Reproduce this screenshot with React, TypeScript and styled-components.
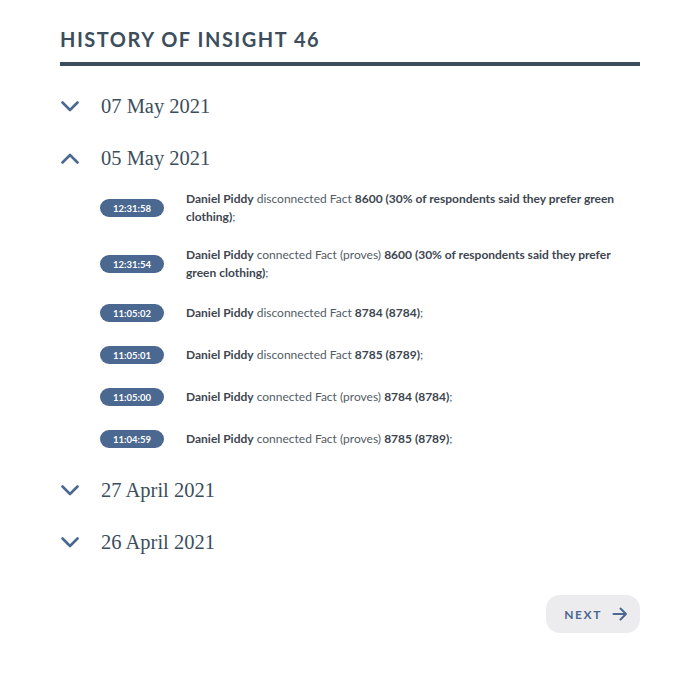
import React, { useState } from 'react'
import styled, { createGlobalStyle } from 'styled-components'

interface LogEntry {
  time: string
  parts: { text: string; bold?: boolean }[]
}

interface DayGroup {
  date: string
  entries: LogEntry[]
}

const GlobalStyle = createGlobalStyle`
  body { margin: 0; background: #fff; font-family: Lato, "Open Sans", sans-serif; }
`

const Page = styled.div`
  padding: 25px 37px 40px 60px;
  width: 580px;
`
const Title = styled.h1`
  margin: 0; font-size: 20px; font-weight: 700; letter-spacing: 1.5px;
  color: #3c4e5d; line-height: 28px; padding-bottom: 9px;
  border-bottom: 4px solid #3c4e5d;
`
const List = styled.div`
  display: flex; flex-direction: column; gap: 8px; margin-top: 18px;
`
const DayHeader = styled.button`
  display: flex; align-items: center; height: 44px; padding: 0;
  border: none; background: none; cursor: pointer; text-align: left;
`
const ChevronBox = styled.span`
  width: 40px; display: flex; align-items: center; padding-left: 1px;
`
const DateLabel = styled.span`
  font-family: "Liberation Serif", "DejaVu Serif", serif;
  font-size: 20.5px; color: #3c4e5d;
`
const Entries = styled.div`
  display: flex; flex-direction: column;
`
const EntryRow = styled.div`
  display: flex; align-items: center; min-height: 42px; padding: 10px 0;
  box-sizing: border-box; margin-left: 40px;
`
const Badge = styled.span`
  flex: none; width: 64px; height: 18px; border-radius: 9px;
  background: #4b6890; color: #fff; font-size: 9.5px; font-weight: 700;
  display: flex; align-items: center; justify-content: center;
`
const EntryText = styled.div`
  margin-left: 22px; font-size: 12px; line-height: 18px; color: #535c66;
  flex: 1;
`
const Strong = styled.b`
  font-weight: 700; color: #3d4650;
`
const Footer = styled.div`
  display: flex; justify-content: flex-end; margin-top: 31px;
`
const NextButton = styled.button`
  display: flex; align-items: center; gap: 10px; height: 38px; padding: 0 12px 0 18px;
  border: none; border-radius: 14px; background: #ececee; cursor: pointer;
  font-family: Lato, sans-serif; font-size: 12px; font-weight: 700;
  letter-spacing: 1.6px; color: #4b6890;
`

const groups: DayGroup[] = [
  { date: '07 May 2021', entries: [] },
  {
    date: '05 May 2021',
    entries: [
      { time: '12:31:58', parts: [{ text: 'Daniel Piddy', bold: true }, { text: ' disconnected Fact ' }, { text: '8600 (30% of respondents said they prefer green clothing)', bold: true }, { text: ';' }] },
      { time: '12:31:54', parts: [{ text: 'Daniel Piddy', bold: true }, { text: ' connected Fact (proves) ' }, { text: '8600 (30% of respondents said they prefer green clothing)', bold: true }, { text: ';' }] },
      { time: '11:05:02', parts: [{ text: 'Daniel Piddy', bold: true }, { text: ' disconnected Fact ' }, { text: '8784 (8784)', bold: true }, { text: ';' }] },
      { time: '11:05:01', parts: [{ text: 'Daniel Piddy', bold: true }, { text: ' disconnected Fact ' }, { text: '8785 (8789)', bold: true }, { text: ';' }] },
      { time: '11:05:00', parts: [{ text: 'Daniel Piddy', bold: true }, { text: ' connected Fact (proves) ' }, { text: '8784 (8784)', bold: true }, { text: ';' }] },
      { time: '11:04:59', parts: [{ text: 'Daniel Piddy', bold: true }, { text: ' connected Fact (proves) ' }, { text: '8785 (8789)', bold: true }, { text: ';' }] },
    ],
  },
  { date: '27 April 2021', entries: [] },
  { date: '26 April 2021', entries: [] },
]

function Chevron({ up }: { up: boolean }) {
  return (
    <svg width="18" height="11" viewBox="0 0 18 11" fill="none">
      <path
        d={up ? 'M1.5 9.5 L9 2 L16.5 9.5' : 'M1.5 1.5 L9 9 L16.5 1.5'}
        stroke="#4b6890" strokeWidth="2.6" strokeLinecap="round" strokeLinejoin="round"
      />
    </svg>
  )
}

export default function App() {
  const [open, setOpen] = useState<string | null>('05 May 2021')

  return (
    <Page>
      <GlobalStyle />
      <Title>HISTORY OF INSIGHT 46</Title>
      <List>
        {groups.map(g => {
          const isOpen = open === g.date
          return (
            <div key={g.date}>
              <DayHeader onClick={() => setOpen(isOpen ? null : g.date)}>
                <ChevronBox><Chevron up={isOpen} /></ChevronBox>
                <DateLabel>{g.date}</DateLabel>
              </DayHeader>
              {isOpen && (
                <Entries>
                  {g.entries.map(e => (
                    <EntryRow key={e.time}>
                      <Badge>{e.time}</Badge>
                      <EntryText>
                        {e.parts.map((p, i) => p.bold ? <Strong key={i}>{p.text}</Strong> : <span key={i}>{p.text}</span>)}
                      </EntryText>
                    </EntryRow>
                  ))}
                </Entries>
              )}
            </div>
          )
        })}
      </List>
      <Footer>
        <NextButton>
          NEXT
          <svg width="16" height="14" viewBox="0 0 16 14" fill="none">
            <path d="M1.5 7 H14 M8.5 1.5 L14 7 L8.5 12.5" stroke="#4b6890" strokeWidth="2" strokeLinecap="round" strokeLinejoin="round" />
          </svg>
        </NextButton>
      </Footer>
    </Page>
  )
}
